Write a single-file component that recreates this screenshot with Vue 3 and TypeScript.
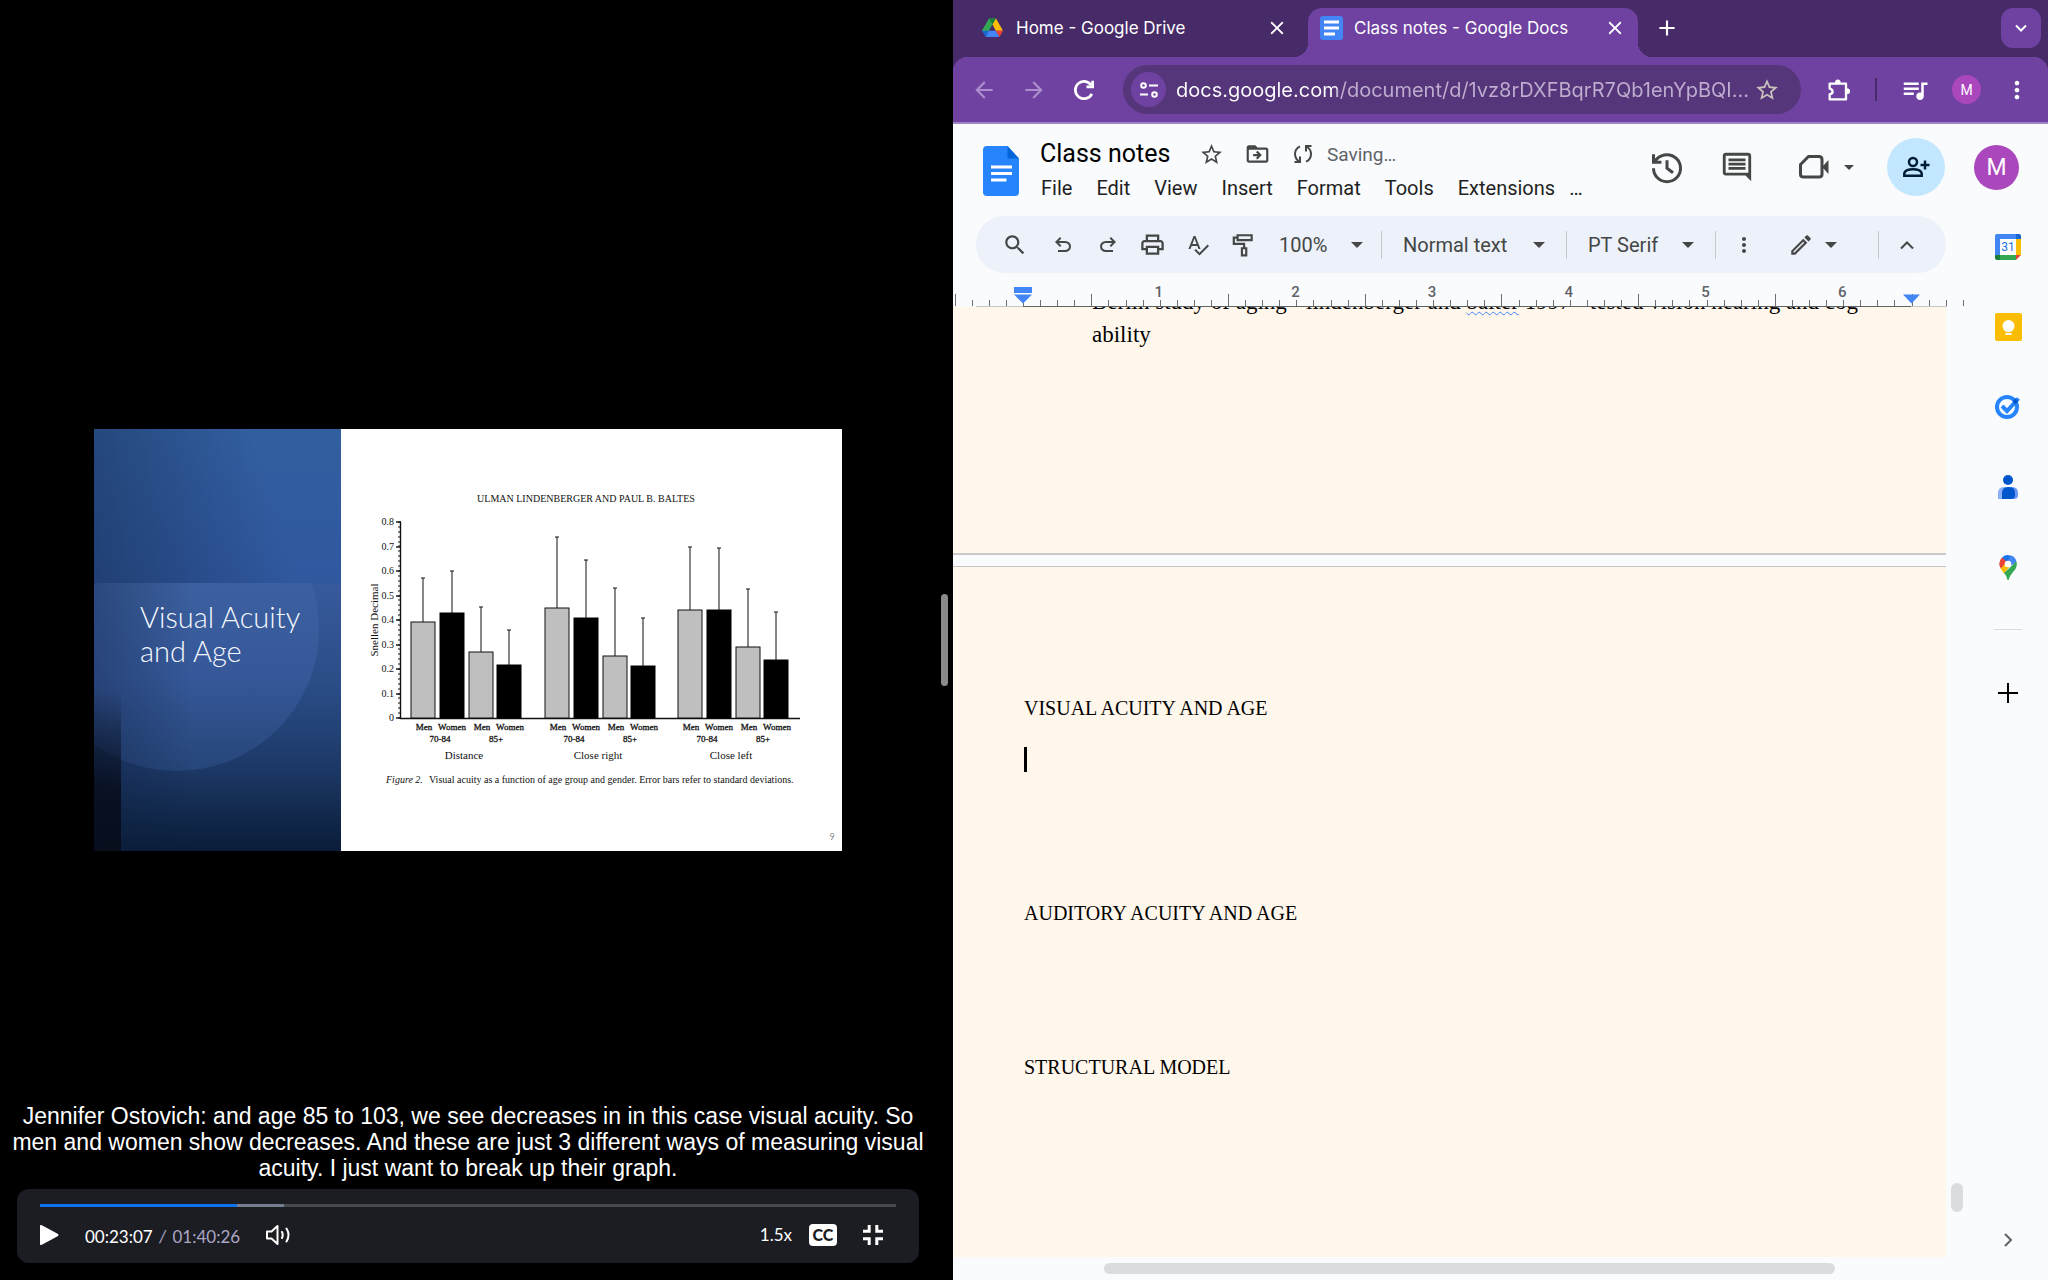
<script setup lang="ts">
import { ref } from 'vue'

interface Bar {
  value: number
  error: number
}

interface BarGroup {
  name: string
  x: number
  bars: Bar[]
}

const groups: BarGroup[] = [
  { name: 'Distance', x: 70, bars: [{ value: 0.39, error: 0.57 }, { value: 0.43, error: 0.6 }, { value: 0.27, error: 0.455 }, { value: 0.215, error: 0.36 }] },
  { name: 'Close right', x: 204, bars: [{ value: 0.447, error: 0.74 }, { value: 0.408, error: 0.645 }, { value: 0.252, error: 0.53 }, { value: 0.212, error: 0.41 }] },
  { name: 'Close left', x: 337, bars: [{ value: 0.442, error: 0.7 }, { value: 0.44, error: 0.695 }, { value: 0.288, error: 0.525 }, { value: 0.238, error: 0.433 }] },
]
const barOffsets = [0, 29, 58, 86]
const axisTicks = [0, 0.1, 0.2, 0.3, 0.4, 0.5, 0.6, 0.7, 0.8]
const minorTicks = Array.from({ length: 41 }, (_, i) => i * 0.02)
const yOf = (v: number): number => Math.round(289 - v * 245)

// One inch on the ruler, and the distance of its zero from the left end.
const inch = 136.7
const rulerZero = 70
const rulerTicks = Array.from({ length: 60 }, (_, i) => {
  const eighth = i - 4
  return { x: Math.round(rulerZero + (eighth * inch) / 8), tall: Math.abs(eighth % 8) === 4 }
})
const rulerNumbers = [1, 2, 3, 4, 5, 6]

const menus = ['File', 'Edit', 'View', 'Insert', 'Format', 'Tools', 'Extensions', '…']
const progress = ref(23)
const address = ref('docs.google.com/document/d/1vz8rDXFBqrR7Qb1enYpBQI…')
const docTitle = ref('Class notes')
const zoom = ref('100%')
const paragraphStyle = ref('Normal text')
const fontFamily = ref('PT Serif')

const icon = {
  close: 'M19 6.41L17.59 5 12 10.59 6.41 5 5 6.41 10.59 12 5 17.59 6.41 19 12 13.41 17.59 19 19 17.59 13.41 12z',
  add: 'M19 13h-6v6h-2v-6H5v-2h6V5h2v6h6v2z',
  back: 'M20 11H7.83l5.59-5.59L12 4l-8 8 8 8 1.41-1.41L7.83 13H20v-2z',
  forward: 'M12 4l-1.41 1.41L16.17 11H4v2h12.17l-5.58 5.59L12 20l8-8z',
  star: 'M22 9.24l-7.19-.62L12 2 9.19 8.63 2 9.24l5.46 4.73L5.82 21 12 17.27 18.18 21l-1.63-7.03L22 9.24zM12 15.4l-3.76 2.27 1-4.28-3.32-2.88 4.38-.38L12 6.1l1.71 4.04 4.38.38-3.32 2.88 1 4.28L12 15.4z',
  search: 'M15.5 14h-.79l-.28-.27C15.41 12.59 16 11.11 16 9.5 16 5.91 13.09 3 9.5 3S3 5.91 3 9.5 5.91 16 9.5 16c1.61 0 3.09-.59 4.23-1.57l.27.28v.79l5 4.99L20.49 19l-4.99-5zm-6 0C7.01 14 5 11.99 5 9.5S7.01 5 9.5 5 14 7.01 14 9.5 11.99 14 9.5 14z',
  more: 'M12 8c1.1 0 2-.9 2-2s-.9-2-2-2-2 .9-2 2 .9 2 2 2zm0 2c-1.1 0-2 .9-2 2s.9 2 2 2 2-.9 2-2-.9-2-2-2zm0 6c-1.1 0-2 .9-2 2s.9 2 2 2 2-.9 2-2-.9-2-2-2z',
  music: 'M15 6H3v2h12V6zm0 4H3v2h12v-2zM3 16h8v-2H3v2zM17 6v8.18c-.31-.11-.65-.18-1-.18-1.66 0-3 1.34-3 3s1.34 3 3 3 3-1.34 3-3V8h3V6h-5z',
  caret: 'M7 10l5 5 5-5z',
  comment: 'M21.99 4c0-1.1-.89-2-1.99-2H4c-1.1 0-2 .9-2 2v12c0 1.1.9 2 2 2h14l4 4-.01-18zM20 4v12H4V4h16zM6 12h12v2H6zm0-3h12v2H6zm0-3h12v2H6z',
  folder: 'M20 6h-8l-2-2H4c-1.1 0-2 .9-2 2v12c0 1.1.9 2 2 2h16c1.1 0 2-.9 2-2V8c0-1.1-.9-2-2-2zm0 12H4V8h16v10zM12 17l4-4-4-4-1.4 1.4 1.6 1.6H8v2h4.2l-1.6 1.6z',
  undo: 'M7 19v-2h7.1q1.575 0 2.738-1T18 13.5 16.838 11 14.1 10H7.8l2.6 2.6L9 14 4 9l5-5 1.4 1.4L7.8 8h6.3q2.425 0 4.163 1.575T20 13.5t-1.737 3.925T14.1 19z',
  redo: 'M9.9 19q-2.425 0-4.163-1.575T4 13.5t1.737-3.925T9.9 8h6.3l-2.6-2.6L15 4l5 5-5 5-1.4-1.4 2.6-2.6H9.9q-1.575 0-2.738 1T6 13.5 7.162 16 9.9 17H17v2z',
  print: 'M19 8h-1V3H6v5H5c-1.66 0-3 1.34-3 3v6h4v4h12v-4h4v-6c0-1.66-1.34-3-3-3zM8 5h8v3H8V5zm8 12v2H8v-4h8v2zm2-2v-2H6v2H4v-4c0-.55.45-1 1-1h14c.55 0 1 .45 1 1v4h-2z',
  spell: 'M12.45 16h2.09L9.43 3H7.57L2.46 16h2.09l1.12-3h5.64l1.14 3zm-6.02-5L8.5 5.48 10.57 11H6.43zm15.16.59l-8.09 8.09L9.83 16l-1.41 1.41 5.09 5.09L23 13l-1.41-1.41z',
  pencil: 'M14.06 9.02l.92.92L5.92 19H5v-.92l9.06-9.06M17.66 3c-.25 0-.51.1-.7.29l-1.83 1.83 3.75 3.75 1.83-1.83c.39-.39.39-1.02 0-1.41l-2.34-2.34c-.2-.2-.45-.29-.71-.29zm-3.6 3.19L3 17.25V21h3.75L17.81 9.94l-3.75-3.75z',
}
</script>

<template>
  <div class="screen">
    <section class="player" aria-label="Lecture recording">
      <div class="stage">
        <div class="slide">
          <div class="slide-title">
            <div class="slide-orb"></div>
            <div class="slide-shade"></div>
            <h2>Visual Acuity<br />and Age</h2>
          </div>
          <svg class="figure" viewBox="0 0 501 422" role="img" aria-label="Visual acuity by age group and gender">
            <text x="245" y="73" class="f10" text-anchor="middle">ULMAN LINDENBERGER AND PAUL B. BALTES</text>
            <text class="f11" text-anchor="middle" transform="translate(37 191) rotate(-90)">Snellen Decimal</text>
            <path class="axis" d="M59.500 93V290 M59 289.500H459" />
            <path v-for="t in minorTicks" :key="'m' + t" class="axis thin" :d="`M57 ${yOf(t)}h3`" />
            <g v-for="t in axisTicks" :key="t">
              <path class="axis" :d="`M55 ${yOf(t)}h5`" />
              <text x="53" :y="yOf(t) + 3" class="f10" text-anchor="end">{{ t === 0 ? '0' : t }}</text>
            </g>
            <g v-for="g in groups" :key="g.name">
              <g v-for="(b, i) in g.bars" :key="i">
                <path class="axis thin" :d="`M${g.x + barOffsets[i] + 12} ${yOf(b.error)}V${yOf(b.value)}m-2 ${yOf(b.error) - yOf(b.value)}h4`" />
                <rect :x="g.x + barOffsets[i]" :y="yOf(b.value)" width="24" :height="289 - yOf(b.value)" :class="i % 2 ? 'women' : 'men'" />
              </g>
              <text :x="g.x + 13" y="301" class="f9" text-anchor="middle">Men</text>
              <text :x="g.x + 41" y="301" class="f9" text-anchor="middle">Women</text>
              <text :x="g.x + 71" y="301" class="f9" text-anchor="middle">Men</text>
              <text :x="g.x + 99" y="301" class="f9" text-anchor="middle">Women</text>
              <text :x="g.x + 29" y="313" class="f9" text-anchor="middle">70-84</text>
              <text :x="g.x + 85" y="313" class="f9" text-anchor="middle">85+</text>
              <text :x="g.x + 53" y="330" class="f11" text-anchor="middle">{{ g.name }}</text>
            </g>
            <text x="45" y="354" class="f10 em">Figure 2.</text>
            <text x="88" y="354" class="f10">Visual acuity as a function of age group and gender. Error bars refer to standard deviations.</text>
            <text x="491" y="411" class="page-no" text-anchor="middle">9</text>
          </svg>
        </div>
      </div>
      <div class="overlay">
        <p class="caption">Jennifer Ostovich: and age 85 to 103, we see decreases in in this case visual acuity. So men and women show decreases. And these are just 3 different ways of measuring visual acuity. I just want to break up their graph.</p>
        <div class="controls">
          <input v-model="progress" class="seek" type="range" min="0" max="100" aria-label="Seek" />
          <div class="control-row">
            <button aria-label="Play"><svg width="19" height="22" viewBox="0 0 20 22"><path d="M0 1.500Q0 0 1.500 .6L19 10Q20 11 19 12L1.500 21.400Q0 22 0 20.500z" fill="#fff" /></svg></button>
            <span class="time">00:23:07 <span class="total"><i>/</i> 01:40:26</span></span>
            <button aria-label="Volume">
              <svg class="line" width="26" height="22" viewBox="0 0 26 22"><path d="M2 7.500v7h4.500l6 5.500V2L6.500 7.500z" stroke-linejoin="round" /><path d="M17 8q1.500 3 0 6M21.500 4.500q4 6.500 0 13" stroke-linecap="round" /></svg>
            </button>
            <button class="speed">1.5x</button>
            <button class="cc" aria-label="Captions">CC</button>
            <button aria-label="Exit full screen">
              <svg class="line thick" width="20" height="20" viewBox="0 0 20 20"><path d="M6.200 0v6.200H0M13.800 0v6.200H20M6.200 20v-6.200H0M13.800 20v-6.200H20" /></svg>
            </button>
          </div>
        </div>
      </div>
      <div class="splitter"><span></span></div>
    </section>

    <section class="browser" aria-label="Browser">
      <div class="tabs">
        <div class="tab">
          <svg width="21" height="20" viewBox="0 0 21 20">
            <path d="M7 0.500h7L7.300 12 3.800 18 0 12.500z" fill="#34a853" />
            <path d="M7 .5h7l-3.500 6z" fill="#188038" />
            <path d="M14 .5L21 12.800h-7.200L10.500 6.500z" fill="#fbbc04" />
            <path d="M0 12.800h7L3.600 19z" fill="#1967d2" />
            <path d="M7 12.800h7L17.400 19H3.600z" fill="#4285f4" />
            <path d="M13.800 12.800H21L17.400 19z" fill="#ea4335" />
          </svg>
          <span>Home - Google Drive</span>
          <button aria-label="Close tab"><svg width="22" height="22" viewBox="0 0 24 24"><path :d="icon.close" /></svg></button>
        </div>
        <div class="tab active">
          <svg width="23" height="24" viewBox="0 0 23 24"><rect width="23" height="24" rx="3" fill="#4285f4" /><path d="M4 6h15M4 12h15M4 18h11" stroke="#fff" stroke-width="3" /></svg>
          <span>Class notes - Google Docs</span>
          <button aria-label="Close tab"><svg width="22" height="22" viewBox="0 0 24 24"><path :d="icon.close" /></svg></button>
        </div>
        <button class="new-tab" aria-label="New tab"><svg width="26" height="26" viewBox="0 0 24 24"><path :d="icon.add" /></svg></button>
        <button class="tab-search" aria-label="Search tabs"><svg width="16" height="16" viewBox="0 0 16 16" class="line"><path d="M3 5.500l5 5 5-5" /></svg></button>
      </div>
      <div class="nav">
        <button class="dim" aria-label="Back"><svg width="26" height="26" viewBox="0 0 24 24"><path :d="icon.back" /></svg></button>
        <button class="dim" aria-label="Forward"><svg width="26" height="26" viewBox="0 0 24 24"><path :d="icon.forward" /></svg></button>
        <button aria-label="Reload"><svg width="26" height="26" viewBox="0 0 24 24" class="line reload"><path d="M19.200 15.500A8 8 0 1 1 18.500 7.300M20 3.500v5.700h-5.700" /></svg></button>
        <div class="address">
          <button class="site" aria-label="Site information"><svg width="18" height="16" viewBox="0 0 18 16" class="line"><circle cx="3.500" cy="3.500" r="2.300" /><path d="M9 3.500h9M0 12.500h8" /><circle cx="14.500" cy="12.500" r="2.300" /></svg></button>
          <input v-model="address" type="text" aria-label="Address" spellcheck="false" />
          <button class="bookmark" aria-label="Bookmark"><svg width="26" height="26" viewBox="0 0 24 24"><path :d="icon.star" /></svg></button>
        </div>
        <button aria-label="Extensions">
          <svg width="28" height="28" viewBox="0 0 24 24"><path class="puzzle" d="M4 6.500h14V20H4v-4.300q2.500-.4 2.500-2.400T4 10.800z" /><path d="M8.500 6q0-3 2.500-3t2.500 3zM18.500 10.500q3 0 3 2.500t-3 2.500z" /></svg>
        </button>
        <span class="nav-rule"></span>
        <button aria-label="Media controls"><svg width="30" height="30" viewBox="0 0 24 24"><path :d="icon.music" /></svg></button>
        <button class="avatar small" aria-label="Profile">M</button>
        <button aria-label="Browser menu"><svg width="28" height="32" viewBox="0 0 24 24"><path :d="icon.more" /></svg></button>
      </div>

      <header class="doc-header">
        <svg class="logo" width="36" height="50" viewBox="0 0 36 50"><path d="M4 0h20.500L36 12.500V46q0 4-4 4H4q-4 0-4-4V4q0-4 4-4z" fill="#2684fc" /><path d="M24.500 0L36 12.500H24.500z" fill="#0066da" /><path d="M8 21h21M8 27.500h21M8 34h15.500" stroke="#fff" stroke-width="3" /></svg>
        <div class="heading">
          <div class="title-row">
            <input v-model="docTitle" class="doc-title" type="text" aria-label="Document name" />
            <button aria-label="Star"><svg width="25" height="25" viewBox="0 0 24 24"><path :d="icon.star" /></svg></button>
            <button aria-label="Move"><svg width="27" height="26" viewBox="0 0 24 24"><path :d="icon.folder" /></svg></button>
            <svg width="24" height="24" viewBox="0 0 24 24" class="line"><path d="M9 4.300Q4 6.500 4 12q0 4.500 4 7.300M3.500 20H9v-5.500M15 19.700q5-2.200 5-7.700 0-4.500-4-7.300M20.500 4H15v5.500" /></svg>
            <span class="saving">Saving…</span>
          </div>
          <nav class="menus"><button v-for="m in menus" :key="m">{{ m }}</button></nav>
        </div>
        <div class="actions">
          <button aria-label="Version history"><svg width="36" height="36" viewBox="0 0 24 24" class="line"><path d="M3 12.800a9 9 0 1 0 9-9 9.750 9.750 0 0 0-6.740 2.740L3 8.800M3 3.500v5.300h5.300M12 7.500v5.300l4 3" /></svg></button>
          <button aria-label="Comments"><svg width="34" height="34" viewBox="0 0 24 24"><path :d="icon.comment" /></svg></button>
          <button class="meet" aria-label="Meet">
            <svg width="30" height="24" viewBox="0 0 30 24"><path class="cam" d="M9.500 1.500H20q3 0 3 3v15q0 2.500-3 2.500H4.500q-3 0-3-2.500V9.500z" /><path d="M23 12l6.500-7v14z" /></svg>
            <svg width="24" height="24" viewBox="0 0 24 24"><path :d="icon.caret" /></svg>
          </button>
          <button class="share" aria-label="Share"><svg width="28" height="22" viewBox="0 0 28 22"><g fill="none" stroke="#001d35" stroke-width="2.500"><circle cx="11" cy="6" r="4" /><path d="M2.300 19.700v-2.400q1-4 8.700-4t8.700 4v2.400zM23 4.500v9M18.500 9h9" /></g></svg></button>
          <button class="avatar" aria-label="Account">M</button>
        </div>
      </header>

      <div class="work">
        <main class="editor">
          <div class="toolbar">
            <button class="tool first" aria-label="Search menus"><svg width="26" height="26" viewBox="0 0 24 24"><path :d="icon.search" /></svg></button>
            <button class="tool" aria-label="Undo"><svg width="24" height="24" viewBox="0 0 24 24"><path :d="icon.undo" /></svg></button>
            <button class="tool" aria-label="Redo"><svg width="24" height="24" viewBox="0 0 24 24"><path :d="icon.redo" /></svg></button>
            <button class="tool" aria-label="Print"><svg width="27" height="27" viewBox="0 0 24 24"><path :d="icon.print" /></svg></button>
            <button class="tool" aria-label="Spelling"><svg width="24" height="26" viewBox="0 0 24 24"><path :d="icon.spell" /></svg></button>
            <button class="tool" aria-label="Paint format"><svg width="26" height="28" viewBox="0 0 24 24" class="line"><path d="M7 3h13v4.500H7zM7 5.200H3.500V11H13v4M11 15h4v6.500h-4z" /></svg></button>
            <label class="pick zoom">
              <select v-model="zoom" aria-label="Zoom"><option>100%</option></select>
              <svg width="12" height="6" viewBox="0 0 12 6"><path d="M0 0h12L6 6z" /></svg>
            </label>
            <span class="rule"></span>
            <label class="pick style">
              <select v-model="paragraphStyle" aria-label="Paragraph style"><option>Normal text</option></select>
              <svg width="12" height="6" viewBox="0 0 12 6"><path d="M0 0h12L6 6z" /></svg>
            </label>
            <span class="rule"></span>
            <label class="pick font">
              <select v-model="fontFamily" aria-label="Font"><option>PT Serif</option></select>
              <svg width="12" height="6" viewBox="0 0 12 6"><path d="M0 0h12L6 6z" /></svg>
            </label>
            <span class="rule"></span>
            <button class="tool" aria-label="More"><svg width="24" height="26" viewBox="0 0 24 24"><path :d="icon.more" /></svg></button>
            <button class="mode" aria-label="Editing mode">
              <svg width="26" height="26" viewBox="0 0 24 24"><path :d="icon.pencil" /></svg>
              <svg width="12" height="6" viewBox="0 0 12 6"><path d="M0 0h12L6 6z" /></svg>
            </button>
            <span class="rule last"></span>
            <button class="tool" aria-label="Hide the menus"><svg width="16" height="16" viewBox="0 0 16 16" class="line"><path d="M2 11.500l6-6 6 6" /></svg></button>
          </div>

          <svg class="ruler" width="1015" height="34" viewBox="0 0 1015 34">
            <path d="M23 33.500H994" stroke="#c4c7c5" />
            <path d="M70 33.500H958" stroke="#5f6368" stroke-width="1" />
            <rect v-for="t in rulerTicks" :key="t.x" :x="t.x" :y="t.tall ? 21 : 27" width="1" :height="t.tall ? 12 : 6" fill="#6b6f73" />
            <text v-for="n in rulerNumbers" :key="n" :x="rulerZero + n * inch - 1" y="24" text-anchor="middle">{{ n }}</text>
            <path d="M61 14h18v6H61zM61 21.500h18l-9 9zM950 21.500h17l-8.500 9z" fill="#4285f4" />
          </svg>

          <div class="canvas">
            <div class="pages">
              <article class="page first-page">
                <p>Berlin study of aging - lindenberger and <span class="misspelt">balter</span> 1997 - tested vision hearing and cog ability</p>
              </article>
              <article class="page second-page">
                <section class="three"><h3>VISUAL ACUITY AND AGE</h3><p><span class="cursor"></span></p></section>
                <section class="two"><h3>AUDITORY ACUITY AND AGE</h3></section>
                <section><h3>STRUCTURAL MODEL</h3></section>
              </article>
            </div>
            <div class="track"><span></span></div>
          </div>
          <div class="bottom-track"><span></span></div>
        </main>

        <aside class="side">
          <button aria-label="Calendar">
            <svg width="26" height="26" viewBox="0 0 26 26"><path d="M2 0h19v5H5v16H0V2q0-2 2-2z" fill="#4285f4" /><path d="M21 0h3q2 0 2 2v3h-5z" fill="#1967d2" /><path d="M21 5h5v16h-5z" fill="#fbbc04" /><path d="M5 21h16v5H5z" fill="#34a853" /><path d="M0 21h5v5H2q-2 0-2-2z" fill="#188038" /><path d="M21 21h5l-5 5z" fill="#ea4335" /><path d="M5 5h16v16H5z" fill="#fff" /><text x="13" y="17" text-anchor="middle" class="cal">31</text></svg>
          </button>
          <button aria-label="Keep">
            <svg width="27" height="28" viewBox="0 0 27 28"><rect width="27" height="28" rx="2" fill="#fbbc04" /><circle cx="13.500" cy="13" r="6" fill="#fff" /><path d="M10.500 16h6v2.500h-6zM10.500 20h6v2h-6z" fill="#fff" /></svg>
          </button>
          <button aria-label="Tasks">
            <svg width="26" height="26" viewBox="0 0 26 26"><circle cx="12" cy="13" r="10" fill="none" stroke="#2684fc" stroke-width="4" /><path d="M7 12l5 5L23.500 4.500" fill="none" stroke="#2684fc" stroke-width="4" /><path d="M17.500 7.500l3-3.300 2.600 3.300-3 3z" fill="#0057cc" /></svg>
          </button>
          <button aria-label="Contacts">
            <svg width="20" height="24" viewBox="0 0 20 24"><circle cx="10" cy="5" r="5" fill="#0057cc" /><path d="M6 12h6v12H0v-6q0-6 6-6z" fill="#8ab0fb" /><path d="M10 12h4q6 0 6 6v2q0 4-4 4h-6z" fill="#6d97f6" /><path d="M4 18q0-6 6-6h1q6 0 6 6v2q0 4-4 4H4z" fill="#0057cc" /></svg>
          </button>
          <button aria-label="Maps">
            <svg width="18" height="25" viewBox="0 0 18 25"><path d="M3 2.500Q8-2 14 2L8 9z" fill="#1a73e8" /><path d="M12 .6q5 1.500 5.500 7L11 11 8 7z" fill="#4285f4" /><path d="M3 2.500L8 7l-6 7Q-2 7.500 3 2.500z" fill="#ea4335" /><path d="M6.500 8.500l5 2-6.500 8Q2.500 15 1.700 13.500z" fill="#fbbc04" /><path d="M17.400 6.500Q19 12 14 17q-3.500 4-4.500 8H8.500Q8 21 5 18z" fill="#34a853" /><circle cx="9" cy="9" r="3.300" fill="#fff" /></svg>
          </button>
          <span class="side-rule"></span>
          <button aria-label="Get add-ons"><svg width="20" height="20" viewBox="0 0 20 20"><path d="M10 0v20M0 10h20" stroke="#000" stroke-width="2" /></svg></button>
          <button class="collapse" aria-label="Hide side panel"><svg width="16" height="16" viewBox="0 0 16 16" class="line"><path d="M5 2l6 6-6 6" /></svg></button>
        </aside>
      </div>
    </section>
  </div>
</template>

<style>
body {
  background: #000;
}
</style>

<style scoped>
* {
  box-sizing: border-box;
}
h2,
h3,
p {
  margin: 0;
  font-weight: 400;
}
button,
input,
select {
  margin: 0;
  padding: 0;
  border: 0;
  outline: 0;
  background: none;
  color: inherit;
  font: inherit;
}
button {
  display: flex;
  align-items: center;
  justify-content: center;
  flex: none;
}
svg {
  display: block;
  flex: none;
  fill: currentColor;
}
.line {
  fill: none;
  stroke: currentColor;
  stroke-width: 2;
}
.line.thick {
  stroke-width: 3;
}
.line.reload {
  stroke-width: 2.5;
}
.screen {
  display: flex;
  height: 100vh;
  font-family: Roboto, sans-serif;
}

/* Lecture player */
.player {
  flex: 953 1 0;
  min-width: 0;
  display: grid;
  grid-template-columns: 1fr 17px;
  grid-template-rows: 100vh;
  background: #000;
}
.stage,
.overlay {
  grid-area: 1 / 1;
}
.stage {
  display: flex;
  align-items: center;
  padding: 0 94px;
}
.slide {
  flex: 1;
  display: grid;
  grid-template-columns: 247fr 501fr;
  background: #fff;
}
.slide-title {
  position: relative;
  overflow: hidden;
  background: linear-gradient(75deg, rgba(20, 42, 80, 0.55), rgba(40, 80, 150, 0) 70%) 0 0 / 100% 154px no-repeat,
    linear-gradient(#325fa0, #30589f) 0 0 / 100% 154px no-repeat,
    linear-gradient(#375a9c 154px, #2a4c86 260px, #1c3866 340px, #0a1d38);
}
.slide-orb {
  position: absolute;
  left: -59px;
  top: 58px;
  width: 284px;
  height: 284px;
  border-radius: 50%;
  clip-path: inset(96px 0 0 0);
  background: linear-gradient(#3c609f 96px, #365899 190px, #264578);
}
.slide-shade {
  position: absolute;
  left: 0;
  right: 0;
  top: 154px;
  bottom: 0;
  background: linear-gradient(rgba(5, 8, 18, 0) 40%, rgba(5, 8, 18, 0.75) 78%) 0 0 / 27px 100% no-repeat,
    linear-gradient(90deg, rgba(12, 28, 60, 0.35), rgba(12, 28, 60, 0) 40%);
}
.slide-title h2 {
  position: relative;
  margin: 171px 0 0 46px;
  color: #f4f8ff;
  font: 300 29px/34px Lato, sans-serif;
  white-space: nowrap;
}
.figure {
  width: 100%;
  font-family: "Liberation Serif", serif;
  fill: #111;
}
.f9 {
  font-size: 9px;
  stroke: #111;
  stroke-width: 0.3px;
}
.f10 {
  font-size: 10px;
}
.f11 {
  font-size: 11px;
}
.em {
  font-style: italic;
}
.page-no {
  font: 9px Lato, sans-serif;
  fill: #888;
}
.axis {
  fill: none;
  stroke: #111;
  stroke-width: 1.4;
}
.axis.thin {
  stroke-width: 1;
}
.men {
  fill: #bfbfbf;
  stroke: #111;
}
.women {
  fill: #000;
  stroke: #000;
}
.overlay {
  align-self: end;
  position: relative;
  padding: 0 17px 17px;
}
.caption {
  margin: 0 -8px 8px;
  color: #fff;
  font: 23px/26px "Liberation Sans", Arial, sans-serif;
  text-align: center;
}
.controls {
  height: 74px;
  padding: 15px 23px 0;
  border-radius: 12px;
  background: #1c1d23;
  color: #fff;
  font: 17px/20px Lato, sans-serif;
}
.seek {
  display: block;
  width: 100%;
  height: 3px;
  appearance: none;
  background: linear-gradient(90deg, #0e72ed 23%, #747f92 23%, #747f92 28.5%, #474850 28.5%);
}
.seek::-webkit-slider-thumb {
  appearance: none;
  width: 0;
  height: 0;
}
.control-row {
  display: flex;
  align-items: center;
  height: 22px;
  margin-top: 17px;
}
.time {
  margin: 3px 25px 0 26px;
  white-space: pre;
}
.total {
  color: #aba7c3;
}
.total i {
  margin: 0 2px;
}
.speed {
  margin-left: auto;
}
.cc {
  width: 28px;
  height: 22px;
  margin: 0 26px 0 17px;
  border-radius: 4px;
  background: #fff;
  color: #1c1d23;
  font: 900 16px/22px Lato, sans-serif;
}
.control-row > button:last-child {
  margin-right: 13px;
}
.splitter {
  display: flex;
  align-items: center;
  padding-left: 5px;
}
.splitter span {
  width: 7px;
  height: 92px;
  border-radius: 4px;
  background: #8a8a8a;
}

/* Browser chrome */
.browser {
  flex: 1095 1 0;
  min-width: 0;
  display: flex;
  flex-direction: column;
  background: #f9fbfd;
}
.tabs {
  display: flex;
  height: 57px;
  flex: none;
  padding: 8px 7px 0 15px;
  background: #472a68;
  color: #fff;
  font: 17px/40px Inter, sans-serif;
}
.tab {
  display: flex;
  align-items: center;
  width: 340px;
  height: 40px;
  padding: 0 20px 0 14px;
}
.tab span {
  flex: 1;
  margin-left: 13px;
  white-space: nowrap;
}
.tab.active {
  position: relative;
  width: 330px;
  height: 49px;
  padding: 0 12px 9px 12px;
  border-radius: 14px 14px 0 0;
  background: #6f42a1;
}
.tab.active span {
  margin-left: 11px;
}
.tab.active::before,
.tab.active::after {
  content: "";
  position: absolute;
  bottom: 0;
  width: 14px;
  height: 14px;
}
.tab.active::before {
  left: -14px;
  background: radial-gradient(circle at 0 0, #472a68 14px, #6f42a1 14px);
}
.tab.active::after {
  right: -14px;
  background: radial-gradient(circle at 100% 0, #472a68 14px, #6f42a1 14px);
}
.new-tab {
  height: 40px;
  margin-left: 16px;
}
.tab-search {
  width: 40px;
  height: 40px;
  margin-left: auto;
  border-radius: 12px;
  background: #6f42a1;
}
.nav {
  display: flex;
  align-items: center;
  height: 67px;
  flex: none;
  padding: 0 17px 0 17px;
  border-bottom: 2px solid #a184c4;
  background: radial-gradient(circle at 100% 100%, #6f42a1 14px, #472a68 14px) 0 0 / 14px 14px no-repeat,
    radial-gradient(circle at 0 100%, #6f42a1 14px, #472a68 14px) 100% 0 / 14px 14px no-repeat,
    #6f42a1;
  color: #fff;
}
.nav > button {
  width: 28px;
}
.nav > .dim {
  margin-right: 22px;
  color: #ab8ecb;
}
.address {
  display: flex;
  align-items: center;
  flex: 1;
  min-width: 0;
  height: 49px;
  margin: 0 24px 0 25px;
  padding: 0 21px 0 8px;
  border-radius: 25px;
  background: #56367a;
}
.site {
  width: 35px;
  height: 35px;
  border-radius: 50%;
  background: #6f42a1;
}
.address input {
  flex: 1;
  min-width: 0;
  height: 30px;
  margin: 0 0 0 10px;
  background: linear-gradient(90deg, #fff 161px, #bfaed0 161px);
  background-clip: text;
  color: transparent;
  font: 20px/30px Inter, sans-serif;
}
.bookmark {
  color: #c9c2bd;
}
.puzzle {
  fill: none;
  stroke: currentColor;
  stroke-width: 2;
  stroke-linejoin: round;
}
.nav-rule {
  width: 2px;
  height: 23px;
  margin: 0 24px 0 22px;
  background: #472a68;
}
.avatar {
  width: 45px;
  height: 45px;
  border-radius: 50%;
  background: #ab47bc;
  color: #fff;
  font-size: 23px;
}
.nav > .avatar.small {
  width: 29px;
  height: 29px;
  margin: 0 22px 0 23px;
  font-size: 14px;
}

/* Document header */
.doc-header {
  display: flex;
  height: 92px;
  flex: none;
  padding: 0 29px 0 30px;
  color: #444746;
}
.logo {
  margin-top: 22px;
}
.heading {
  flex: 1;
  min-width: 0;
  padding: 13px 0 0 21px;
}
.title-row {
  display: flex;
  align-items: center;
  height: 34px;
}
.title-row button,
.title-row > svg {
  margin-right: 20px;
}
.doc-title {
  width: 142px;
  margin-right: 17px;
  color: #000;
  font: 25px/32px Roboto, sans-serif;
}
.saving {
  margin-left: -8px;
  font-size: 19px;
  color: #5f6368;
}
.menus {
  display: flex;
  gap: 24px;
  height: 34px;
  padding-left: 1px;
  color: #1f1f1f;
  font-size: 20px;
}
.menus button:last-child {
  margin-left: -10px;
}
.actions {
  display: flex;
  align-items: center;
  height: 86px;
}
.actions .meet {
  margin: 0 26px 0 45px;
}
.actions > button:nth-child(2) {
  margin-left: 35px;
}
.meet svg:last-child {
  margin-left: 8px;
}
.share {
  width: 58px;
  height: 58px;
  margin-right: 29px;
  border-radius: 50%;
  background: #c2e7ff;
}
.cam {
  fill: none;
  stroke: currentColor;
  stroke-width: 3;
}

/* Editor */
.work {
  display: flex;
  flex: 1;
  min-height: 0;
}
.editor {
  flex: 1;
  min-width: 0;
  display: flex;
  flex-direction: column;
  overflow: hidden;
}
.toolbar {
  display: flex;
  align-items: center;
  height: 57px;
  flex: none;
  margin: 0 22px 0 23px;
  padding: 0 17px 0 16px;
  border-radius: 29px;
  background: #edf1fa;
  color: #444746;
  font-size: 20px;
}
.tool {
  width: 45px;
}
.tool.first {
  margin-right: 3px;
}
.pick {
  display: flex;
  align-items: center;
}
.pick select {
  flex: 1;
  min-width: 0;
  appearance: none;
}
.pick.zoom {
  width: 84px;
  margin-left: 14px;
}
.pick.style {
  width: 142px;
}
.pick.font {
  width: 106px;
}
.rule {
  width: 1px;
  height: 28px;
  margin: 0 21px;
  background: #c7c9cc;
}
.pick.zoom + .rule {
  margin-left: 18px;
}
.pick.font + .rule {
  margin-right: 5px;
}
.rule.last {
  margin: 0 5px 0 auto;
}
.mode {
  margin-left: 22px;
}
.mode svg:last-child {
  margin-left: 11px;
}
.ruler text {
  font: 500 15px Roboto, sans-serif;
  fill: #5f6368;
}
.canvas {
  display: flex;
  flex: 1;
  min-height: 0;
}
.pages {
  flex: 1;
  min-width: 0;
  overflow: hidden;
  color: #000;
  font-family: "Liberation Serif", serif;
}
.page {
  background: #fff7eb;
}
.first-page {
  height: 248px;
  padding: 0 35px 0 139px;
  border-bottom: 2px solid #cbc9ca;
  overflow: hidden;
}
.first-page p {
  margin-top: -22px;
  font-size: 23px;
  line-height: 33px;
}
.misspelt {
  text-decoration: underline wavy #4285f4 1px;
  text-underline-offset: 2px;
}
.second-page {
  height: 100%;
  margin-top: 11px;
  padding: 116px 35px 0 71px;
  border-top: 1px solid #c3c5c8;
}
.second-page h3,
.second-page p {
  font-size: 20px;
  line-height: 51px;
}
.second-page .three {
  height: 205px;
}
.second-page .two {
  height: 154px;
}
.cursor {
  display: block;
  width: 3px;
  height: 25px;
  margin-top: 13px;
  background: #000;
}
.track {
  width: 22px;
  display: flex;
  flex-direction: column;
  justify-content: flex-end;
  padding: 0 5px 45px;
}
.track span {
  height: 29px;
  border-radius: 6px;
  background: #dadce0;
}
.bottom-track {
  height: 23px;
  flex: none;
  padding: 6px 133px 0 151px;
}
.bottom-track span {
  display: block;
  height: 11px;
  border-radius: 6px;
  background: #dadce0;
}

/* Side panel */
.side {
  width: 80px;
  flex: none;
  display: flex;
  flex-direction: column;
  align-items: center;
  padding-bottom: 28px;
  color: #5f6368;
}
.side button {
  height: 28px;
  margin: 17px 0 35px;
}
.side-rule {
  width: 28px;
  height: 1px;
  margin: 13px 0 32px;
  background: #dadce0;
}
.side .collapse {
  height: 24px;
  margin: auto 0 0;
}
.cal {
  font: 12px Roboto, sans-serif;
  fill: #1a73e8;
}
</style>
